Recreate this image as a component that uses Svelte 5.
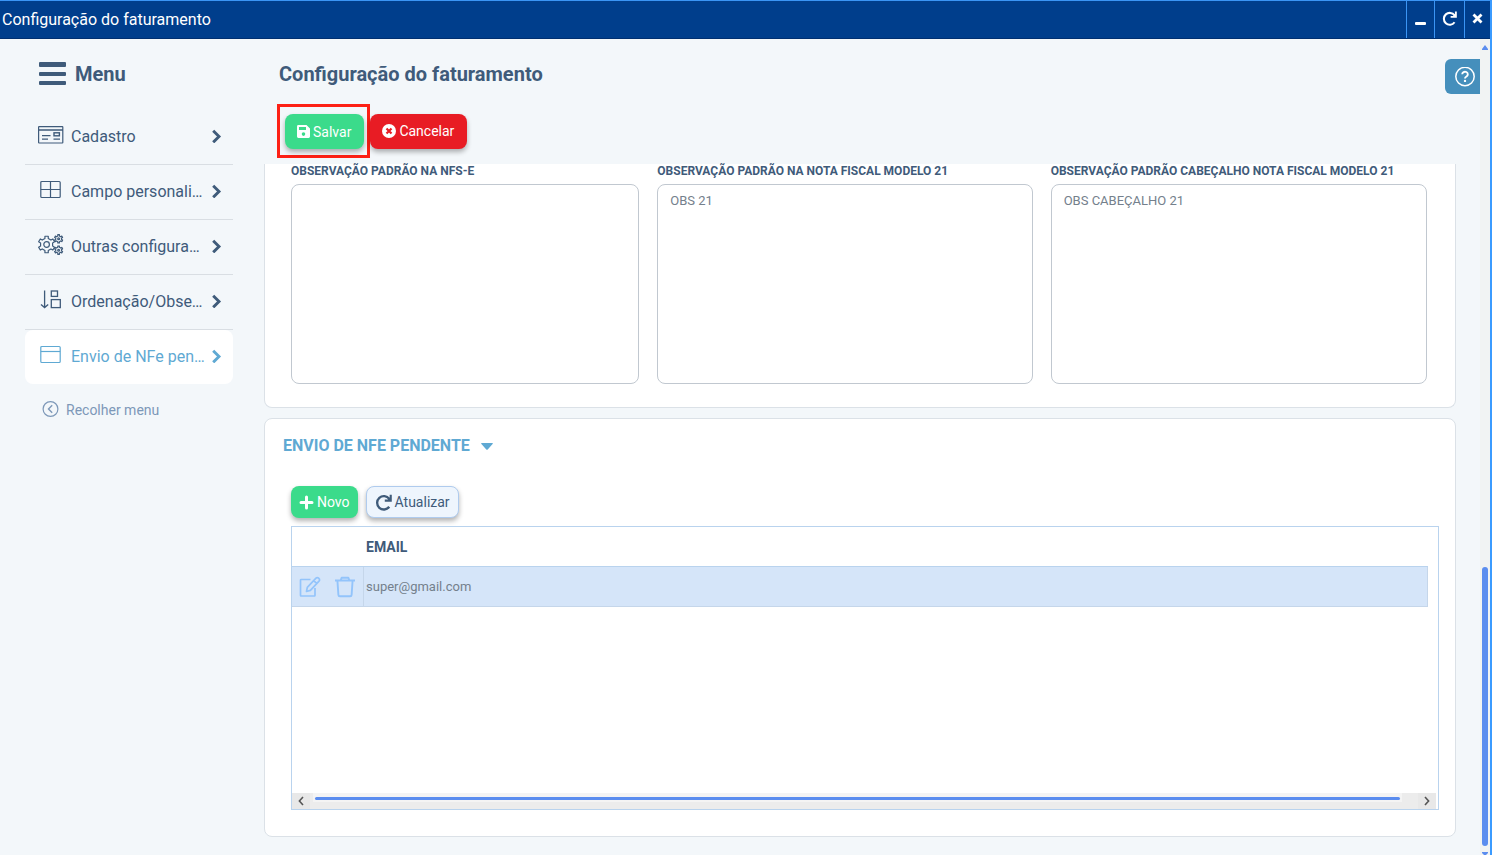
<script lang="ts">
	type MenuItem = { id: string; label: string };

	const menu: MenuItem[] = [
		{ id: "cadastro", label: "Cadastro" },
		{ id: "campo", label: "Campo personali…" },
		{ id: "outras", label: "Outras configura…" },
		{ id: "ordem", label: "Ordenação/Obse…" },
		{ id: "envio", label: "Envio de NFe pen…" }
	];

	let active = $state("envio");

	let notes = $state([
		{ id: "obs-nfse", label: "Observação padrão na NFS-e", value: "" },
		{ id: "obs-21", label: "Observação padrão na nota fiscal modelo 21", value: "OBS 21" },
		{
			id: "obs-cab-21",
			label: "Observação padrão cabeçalho nota fiscal modelo 21",
			value: "OBS CABEÇALHO 21"
		}
	]);

	let emails = $state(["super@gmail.com"]);
	let open = $state(true);

	// outline of a toothed wheel centred on cx, cy, with one tooth pointing up
	function gear(cx: number, cy: number, inner: number, outer: number, teeth: number) {
		const step = (Math.PI * 2) / teeth;
		const points: string[] = [];
		for (let i = 0; i < teeth; i++) {
			const a = i * step - Math.PI / 2;
			for (const [r, o] of [[inner, -0.26], [outer, -0.19], [outer, 0.19], [inner, 0.26]]) {
				const x = cx + r * Math.cos(a + o * step);
				const y = cy + r * Math.sin(a + o * step);
				points.push(`${x.toFixed(2)} ${y.toFixed(2)}`);
			}
		}
		return `M${points.join("L")}Z`;
	}
</script>

{#snippet redo()}
	<path
		d="M13.4 4.6A6.3 6.3 0 1 0 13.4 12"
		fill="none"
		stroke="currentColor"
		stroke-width="2.2"
	/>
	<path d="M15.8 0.6v6.6H9.2V5.2h2.8L13.8 3V0.6z" fill="currentColor" />
{/snippet}

<div class="window">
	<header class="titlebar">
		<span class="caption">Configuração do faturamento</span>
		<button aria-label="Minimizar">
			<svg width="12" height="14" viewBox="0 0 12 14">
				<rect x="0" y="10" width="11" height="3" rx="1" fill="currentColor" />
			</svg>
		</button>
		<button class="wide" aria-label="Recarregar">
			<svg width="15" height="15" viewBox="0 0 16 16">{@render redo()}</svg>
		</button>
		<button aria-label="Fechar">
			<svg width="12" height="12" viewBox="0 0 12 12">
				<path d="M1.5 1.5l8 8M9.5 1.5l-8 8" stroke="currentColor" stroke-width="2.8" />
			</svg>
		</button>
	</header>

	<div class="body">
		<aside class="sidebar">
			<h2 class="menu-title">
				<svg width="28" height="24" viewBox="0 0 28 24" fill="currentColor">
					<rect x="1" y="0" width="27" height="5" rx="1" />
					<rect x="1" y="10" width="27" height="4" rx="1" />
					<rect x="1" y="19" width="27" height="4" rx="1" />
				</svg>
				Menu
			</h2>
			<nav>
				{#each menu as item}
					<button
						class="menu-item"
						class:active={active === item.id}
						onclick={() => (active = item.id)}
					>
						<svg
							class="menu-icon"
							width="26"
							height="24"
							viewBox="0 0 26 24"
							fill="none"
							stroke="currentColor"
							stroke-width="1.2"
						>
							{#if item.id === "cadastro"}
								<rect x="0.6" y="2.6" width="24.2" height="16.4" rx="0.5" />
								<path d="M1 6h24M4 11.6h8.5M4 15.2h6M15.5 15.2h6.5" stroke-width="1.3" />
								<rect x="16" y="8.8" width="5.4" height="3" stroke-width="1.4" />
							{:else if item.id === "campo"}
								<rect x="2.8" y="2.5" width="19.4" height="16" rx="1" />
								<path d="M12.5 2.5v16M2.8 10.5h19.4" />
							{:else if item.id === "outras"}
								<g stroke-linejoin="round">
									<path d={gear(8.6, 10.5, 6.2, 8.4, 6)} />
									<circle cx="8.6" cy="10.5" r="2.8" />
									<path d={gear(20.6, 4.8, 3, 4.2, 6)} />
									<circle cx="20.6" cy="4.8" r="0.9" />
									<path d={gear(20.6, 16.2, 3, 4.2, 6)} />
									<circle cx="20.6" cy="16.2" r="0.9" />
								</g>
							{:else if item.id === "ordem"}
								<path d="M6.6 1.6v16.8M3 15.4l3.6 3.2 3.6-3.2" stroke-width="1.3" />
								<rect x="13.3" y="2" width="6.2" height="5.4" stroke-width="1.3" />
								<rect x="13.3" y="10.6" width="9" height="8" stroke-width="1.3" />
							{:else}
								<rect x="2.8" y="2.5" width="19.4" height="16" rx="1" />
								<path d="M2.8 7.5h19.4" />
							{/if}
						</svg>
						<span class="menu-label">{item.label}</span>
						<svg class="chevron" width="10" height="14" viewBox="0 0 10 14">
							<path d="M1.2 1.7L7 7.5l-5.8 5.8" fill="none" stroke="currentColor" stroke-width="2.9" />
						</svg>
					</button>
				{/each}
			</nav>
			<button class="collapse">
				<svg width="17" height="17" viewBox="0 0 17 17" fill="none" stroke="currentColor">
					<circle cx="8.5" cy="8" r="7.4" stroke-width="1.2" />
					<path d="M10.2 4.3L6.5 8l3.7 3.7" stroke-width="1.4" />
				</svg>
				Recolher menu
			</button>
		</aside>

		<main>
			<h1>Configuração do faturamento</h1>
			<div class="actions">
				<div class="highlight">
					<button class="btn green">
						<svg width="13" height="13" viewBox="0 0 13 13">
							<path
								fill="currentColor"
								fill-rule="evenodd"
								d="M1.4 0h8.1L13 3.5v8.1a1.4 1.4 0 0 1-1.4 1.4H1.4A1.4 1.4 0 0 1 0 11.6V1.4A1.4 1.4 0 0 1 1.4 0zM2 2v3h7V2zM6.5 7.3a1.8 1.8 0 1 0 0 3.6 1.8 1.8 0 1 0 0-3.6z"
							/>
						</svg>
						Salvar
					</button>
				</div>
				<button class="btn red">
					<svg width="14" height="14" viewBox="0 0 14 14">
						<circle cx="7" cy="7" r="7" fill="currentColor" />
						<path d="M4.5 4.5l5 5M9.5 4.5l-5 5" stroke="#e81c24" stroke-width="2.2" />
					</svg>
					Cancelar
				</button>
			</div>

			<section class="card notes">
				{#each notes as note}
					<div class="field">
						<label for={note.id}>{note.label}</label>
						<textarea id={note.id} bind:value={note.value}></textarea>
					</div>
				{/each}
			</section>

			<section class="card">
				<button class="section-title" aria-expanded={open} onclick={() => (open = !open)}>
					Envio de NFe pendente
					<svg width="12" height="8" viewBox="0 0 12 8">
						<path d="M0.6 1h10.8q0.8 0.4 0.2 1L6.7 7.4q-0.7 0.6-1.4 0L0.4 2q-0.6-0.6 0.2-1z" fill="currentColor" />
					</svg>
				</button>
				{#if open}
					<div class="toolbar">
						<button class="btn green small">
							<svg width="15" height="15" viewBox="0 0 15 15">
								<path d="M7.5 2v11M2 7.5h11" stroke="currentColor" stroke-width="3" stroke-linecap="round" />
							</svg>
							Novo
						</button>
						<button class="btn pale small">
							<svg width="17" height="17" viewBox="0 0 16 16">{@render redo()}</svg>
							Atualizar
						</button>
					</div>
					<div class="grid">
						<table>
							<thead>
								<tr>
									<th class="tools" aria-label="Ações"></th>
									<th>Email</th>
								</tr>
							</thead>
							<tbody>
								{#each emails as email}
									<tr>
										<td class="tools">
											<div class="tool-row">
												<button aria-label="Editar">
													<svg width="22" height="22" viewBox="0 0 22 22" fill="none" stroke="currentColor" stroke-width="1.7">
														<path d="M11.5 3.5H2.2a0.7 0.7 0 0 0-0.7 0.7v15.1a0.7 0.7 0 0 0 0.7 0.7h13.1a0.7 0.7 0 0 0 0.7-0.7V12" />
														<path d="M7.5 15.5l0.8-4.2L17 2.2a1.8 1.8 0 0 1 2.6 0l0.4 0.4a1.8 1.8 0 0 1 0 2.6l-8.6 9.2zM14.8 4.6l3 3" stroke-linejoin="round" />
													</svg>
												</button>
												<button aria-label="Excluir">
													<svg width="22" height="22" viewBox="0 0 22 22" fill="none" stroke="currentColor" stroke-width="1.9">
														<path d="M1 4.5h20M6.6 4.5l1-2.7h6.8l1 2.7M3.4 4.5l1 14.4a1.4 1.4 0 0 0 1.4 1.3h10.4a1.4 1.4 0 0 0 1.4-1.3l1-14.4" stroke-linejoin="round" />
													</svg>
												</button>
											</div>
										</td>
										<td>{email}</td>
									</tr>
								{/each}
							</tbody>
						</table>
						<div class="hscroll">
							<button aria-label="Rolar para a esquerda">
								<svg width="6" height="10" viewBox="0 0 6 10">
									<path d="M5 1L1.4 5 5 9" fill="none" stroke="currentColor" stroke-width="1.6" />
								</svg>
							</button>
							<div class="htrack"><div class="hthumb"></div></div>
							<button aria-label="Rolar para a direita">
								<svg width="6" height="10" viewBox="0 0 6 10">
									<path d="M1 1l3.6 4L1 9" fill="none" stroke="currentColor" stroke-width="1.6" />
								</svg>
							</button>
						</div>
					</div>
				{/if}
			</section>
			<button class="help" aria-label="Ajuda">
				<svg width="20" height="20" viewBox="0 0 20 20" fill="none" stroke="currentColor">
					<circle cx="10" cy="9.5" r="9.2" stroke-width="1.5" />
					<path d="M7.2 7.3a2.8 2.6 0 1 1 4.3 2.2q-1.5 0.9-1.5 2" stroke-width="1.9" />
					<circle cx="10" cy="13.9" r="1.2" fill="currentColor" stroke="none" />
				</svg>
			</button>
		</main>

		<div class="vscroll">
			<svg width="6" height="5" viewBox="0 0 6 5"><path d="M3 0l3 4v1H0V4z" fill="#5b8def" /></svg>
			<div class="vtrack">
				<div class="vthumb"></div>
			</div>
			<svg width="6" height="3" viewBox="0 0 6 3"><path d="M0 0h6v1L4 3H2L0 1z" fill="#5b8def" /></svg>
		</div>
	</div>
</div>

<style>
	:global(body) {
		margin: 0;
	}

	.window {
		display: flex;
		flex-direction: column;
		box-sizing: border-box;
		min-height: 100vh;
		border-top: 1px solid #3b95f5;
		border-right: 2px solid #3b9bff;
		background: #f3f7fa;
		color: #3f5b7a;
		font-family: Roboto, sans-serif;
	}

	button {
		margin: 0;
		border: 0;
		padding: 0;
		background: none;
		color: inherit;
		font: inherit;
		cursor: pointer;
	}

	svg {
		flex: none;
		display: block;
	}

	.titlebar {
		display: flex;
		box-sizing: border-box;
		height: 38px;
		border-bottom: 1px solid #002f70;
		background: #003e8c;
		color: #fff;
		font-size: 16px;
	}

	.caption {
		flex: 1;
		padding-left: 2px;
		line-height: 37px;
	}

	.titlebar button {
		display: flex;
		justify-content: center;
		align-items: center;
		box-sizing: border-box;
		width: 28px;
		border-left: 1px solid #3b95f5;
		padding-bottom: 2px;
	}

	.titlebar .wide {
		width: 30px;
	}

	.titlebar button:last-child {
		width: 26px;
	}

	.body {
		display: flex;
		flex: 1;
	}

	.sidebar {
		flex: none;
		box-sizing: border-box;
		width: 264px;
		padding: 20px 31px 0 25px;
	}

	.menu-title {
		display: flex;
		align-items: center;
		gap: 9px;
		margin: 0 0 21px;
		padding-left: 13px;
		height: 30px;
		font-weight: 700;
		font-size: 20px;
	}

	.menu-item {
		display: flex;
		align-items: center;
		box-sizing: border-box;
		width: 100%;
		height: 55px;
		border-bottom: 1px solid #d9dee3;
		padding: 0 11px 2px 13px;
		font-size: 16px;
		text-align: left;
	}

	.menu-item.active {
		height: 54px;
		border-bottom: 0;
		border-radius: 8px;
		background: #fff;
		color: #5fa9d3;
	}

	.menu-icon {
		margin-right: 7px;
	}

	.menu-label {
		flex: 1;
		white-space: nowrap;
	}

	.collapse {
		display: flex;
		align-items: center;
		gap: 7px;
		margin: 17px 0 0 17px;
		color: #7d98b8;
		font-size: 14px;
	}

	main {
		position: relative;
		flex: 1;
		min-width: 0;
		padding: 20px 24px 18px 0;
	}

	h1 {
		margin: 0;
		padding-left: 15px;
		font-weight: 700;
		font-size: 20px;
		line-height: 30px;
	}

	.actions {
		display: flex;
		align-items: center;
		margin: 15px 0 6px 13px;
	}

	.highlight {
		border: 3px solid #fd2015;
		padding: 7px 3px 6px 5px;
	}

	.btn {
		display: flex;
		justify-content: center;
		align-items: center;
		gap: 3px;
		box-sizing: border-box;
		height: 35px;
		border-radius: 8px;
		padding: 0 13px 0 12px;
		box-shadow: 0 3px 5px rgba(0, 0, 0, 0.3);
		font-size: 14px;
	}

	.btn.small {
		height: 32px;
		padding: 0 8px;
	}

	.green {
		background: #3bdb8b;
		color: #fff;
	}

	.red {
		background: #e81c24;
		color: #fff;
	}

	.pale {
		border: 1px solid #afcbee;
		background: #eef5fd;
	}

	.card {
		border: 1px solid #dbe1e7;
		border-radius: 8px;
		background: #fff;
	}

	.notes {
		display: grid;
		grid-template-columns: 348fr 375fr 376fr;
		gap: 18px;
		margin-bottom: 10px;
		border-top: 0;
		border-radius: 0 0 8px 8px;
		padding: 0 28px 23px 26px;
	}

	.field {
		display: flex;
		flex-direction: column;
		min-width: 0;
	}

	label {
		margin-bottom: 6px;
		font-weight: 700;
		font-size: 12px;
		line-height: 14px;
		text-transform: uppercase;
		white-space: nowrap;
	}

	textarea {
		box-sizing: border-box;
		width: 100%;
		height: 200px;
		border: 1px solid #c1c8d0;
		border-radius: 8px;
		padding: 8px 12px;
		background: #fff;
		color: #74808c;
		font-size: 13px;
		font-family: inherit;
		line-height: 16px;
		resize: none;
	}

	.section-title {
		display: flex;
		align-items: center;
		gap: 11px;
		margin: 16px 0 30px 18px;
		color: #5fa9d3;
		font-weight: 700;
		font-size: 16px;
		line-height: 21px;
		text-transform: uppercase;
	}

	.toolbar {
		display: flex;
		gap: 8px;
		margin: 0 0 8px 26px;
	}

	.grid {
		display: flex;
		flex-direction: column;
		box-sizing: border-box;
		min-height: 284px;
		margin: 0 16px 26px 26px;
		border: 1px solid #b9d3ee;
	}

	table {
		width: calc(100% - 10px);
		border-collapse: separate;
		border-spacing: 0;
		font-size: 13px;
	}

	th,
	td {
		box-sizing: border-box;
		height: 40px;
		padding: 0 2px;
		text-align: left;
	}

	th {
		border-bottom: 1px solid #b9d3ee;
		font-size: 14px;
		text-transform: uppercase;
	}

	td {
		border-right: 1px solid #c5d6ea;
		border-bottom: 1px solid #c5d6ea;
		background: #d5e5f9;
		color: #74808c;
	}

	.tools {
		width: 71px;
		padding: 0 7px;
	}

	.tool-row {
		display: flex;
		gap: 13px;
		color: #93c4fb;
	}

	.hscroll {
		display: flex;
		height: 16px;
		margin-top: auto;
		margin-right: 2px;
		background: #ececec;
	}

	.hscroll button {
		display: flex;
		justify-content: center;
		align-items: center;
		width: 18px;
		background: #e8e8e8;
		color: #555;
	}

	.htrack {
		flex: 1;
		height: 9px;
		margin: 0 16px 0 3px;
		background: #f4f4f4;
	}

	.hthumb {
		height: 3px;
		margin: 4px 2px;
		border-radius: 2px;
		background: #5b8def;
	}

	.help {
		position: absolute;
		top: 20px;
		right: 0;
		display: flex;
		justify-content: center;
		align-items: center;
		width: 35px;
		height: 35px;
		border-radius: 6px 0 0 6px;
		padding-left: 4px;
		background: #458fbc;
		color: #fff;
	}

	.vscroll {
		display: flex;
		flex: none;
		flex-direction: column;
		align-items: center;
		width: 10px;
		padding-top: 6px;
		background: #f1f3f3;
	}

	.vtrack {
		display: flex;
		flex: 1;
		flex-direction: column;
		justify-content: flex-end;
		padding-bottom: 6px;
	}

	.vthumb {
		width: 6px;
		height: 35%;
		border-radius: 3px;
		background: #5b8def;
	}
</style>
